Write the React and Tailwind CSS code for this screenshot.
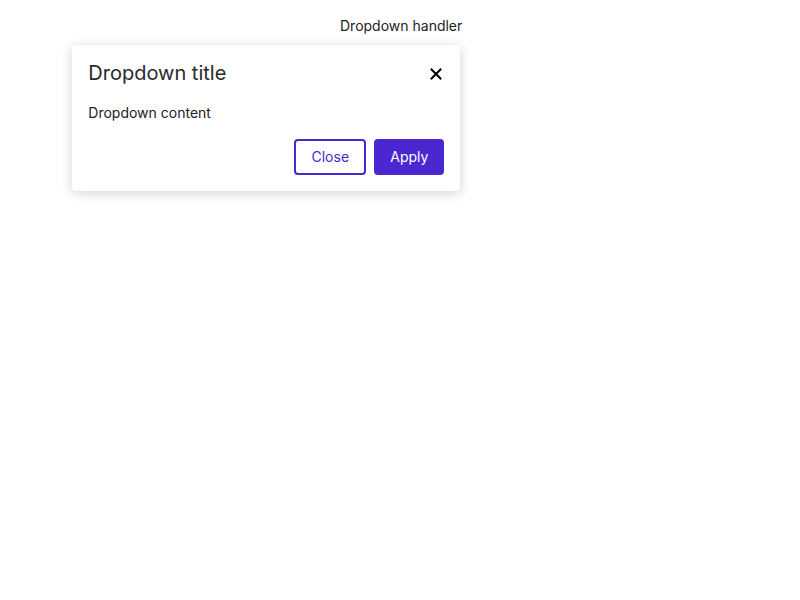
import React from 'react';

export default function App() {
    return (
        <div className="min-h-screen bg-white font-['Inter',sans-serif] text-[#333]">
            <div className="relative ml-[340px] pt-4 inline-block">
                <div className="text-sm leading-5 text-[#222]">Dropdown handler</div>
                <div className="absolute right-[2px] top-[45px] w-[388px] rounded bg-white p-4 shadow-[0_2px_12px_rgba(0,0,0,0.18)]">
                    <div className="flex items-center justify-between">
                        <h3 className="text-xl leading-6 text-[#2a2a2a]">Dropdown title</h3>
                        <button className="flex h-6 w-4 items-center justify-center text-black">
                            <svg className="translate-y-px" width="12" height="12" viewBox="0 0 12 12" fill="none" stroke="currentColor" strokeWidth="2" strokeLinecap="square">
                                <path d="M1.5 1.5 L10.5 10.5 M10.5 1.5 L1.5 10.5" />
                            </svg>
                        </button>
                    </div>
                    <p className="mt-[18px] text-sm leading-5 text-[#222]">Dropdown content</p>
                    <div className="mt-4 flex justify-end gap-2">
                        <button className="h-9 w-[72px] rounded border-2 border-[#4b27d1] text-sm text-[#4b27d1]">Close</button>
                        <button className="h-9 w-[70px] rounded bg-[#4b27d1] text-sm text-white">Apply</button>
                    </div>
                </div>
            </div>
        </div>
    );
}
